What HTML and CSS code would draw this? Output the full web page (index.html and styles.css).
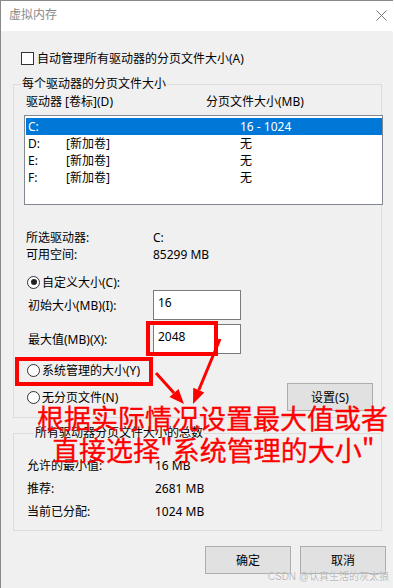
FILE: index.html
```html
<!DOCTYPE html>
<html lang="zh-CN">
<head>
    <meta charset="UTF-8">
    <meta name="viewport" content="width=device-width, initial-scale=1.0">
    <title>虚拟内存</title>
    <link rel="stylesheet" href="styles.css">
</head>
<body>
    <div class="window">
        <div class="titlebar">
            <span class="title">虚拟内存</span>
            <svg class="close" width="11" height="11" viewBox="0 0 11 11">
                <path d="M0.5 0.5 L10.5 10.5 M10.5 0.5 L0.5 10.5" stroke="#777" stroke-width="1" fill="none"/>
            </svg>
        </div>

        <div class="content">
            <label class="check-row"><span class="checkbox"></span>自动管理所有驱动器的分页文件大小(A)</label>

            <fieldset class="group group-drives">
                <legend>每个驱动器的分页文件大小</legend>
                <div class="list-head">
                    <span class="col-drive">驱动器 [卷标](D)</span>
                    <span>分页文件大小(MB)</span>
                </div>
                <div class="drive-list">
                    <div class="drive-row selected"><span class="c-letter">C:</span><span class="c-label"></span><span>16 - 1024</span></div>
                    <div class="drive-row"><span class="c-letter">D:</span><span class="c-label">[新加卷]</span><span>无</span></div>
                    <div class="drive-row"><span class="c-letter">E:</span><span class="c-label">[新加卷]</span><span>无</span></div>
                    <div class="drive-row"><span class="c-letter">F:</span><span class="c-label">[新加卷]</span><span>无</span></div>
                </div>

                <div class="info">
                    <div class="info-row"><span class="info-key">所选驱动器:</span><span>C:</span></div>
                    <div class="info-row"><span class="info-key">可用空间:</span><span>85299 MB</span></div>
                </div>

                <div class="radio-row custom"><span class="radio checked"></span>自定义大小(C):</div>
                <div class="field-row">
                    <span class="field-label">初始大小(MB)(I):</span>
                    <span class="input">16</span>
                </div>
                <div class="field-row second">
                    <span class="field-label">最大值(MB)(X):</span>
                    <span class="input">2048</span>
                </div>
                <div class="radio-row sys"><span class="radio"></span>系统管理的大小(Y)</div>
                <div class="none-row">
                    <span class="radio-inline"><span class="radio"></span>无分页文件(N)</span>
                    <button class="btn">设置(S)</button>
                </div>
            </fieldset>

            <fieldset class="group group-total">
                <legend>所有驱动器分页文件大小的总数</legend>
                <div class="total-row"><span class="total-key">允许的最小值:</span><span>16 MB</span></div>
                <div class="total-row"><span class="total-key">推荐:</span><span>2681 MB</span></div>
                <div class="total-row"><span class="total-key">当前已分配:</span><span>1024 MB</span></div>
            </fieldset>

            <div class="actions">
                <button class="btn">确定</button>
                <button class="btn">取消</button>
            </div>
        </div>

        <!-- annotation layer drawn over the dialog -->
        <div class="annot">
            <div class="mark mark-max"></div>
            <div class="mark mark-sys"></div>
            <svg class="arrows" width="394" height="588" viewBox="0 0 394 588">
                <line x1="156" y1="373" x2="174" y2="393" stroke="#f00" stroke-width="3"/>
                <polygon points="184,404 169.5,396.9 178.5,388.9" fill="#f00"/>
                <line x1="220" y1="339" x2="198.8" y2="390" stroke="#f00" stroke-width="3"/>
                <polygon points="193,404 193.2,387.8 204.3,392.5" fill="#f00"/>
            </svg>
            <div class="note note-1">根据实际情况设置最大值或者</div>
            <div class="note note-2">直接选择"系统管理的大小"</div>
            <div class="watermark">CSDN @认真生活的灰太狼</div>
        </div>
    </div>
</body>
</html>
```

FILE: styles.css
```css
* {
    box-sizing: border-box;
}
html, body {
    margin: 0;
    background: #fff;
}
body {
    font-family: "Noto Sans", "Noto Sans CJK SC", sans-serif;
    font-size: 12px;
    color: #000;
}
.window {
    position: relative;
    width: 393px;
    height: 588px;
    border-left: 1px solid #8a8a8a;
    border-top: 1px solid #8a8a8a;
    background: #f0f0f0;
    overflow: hidden;
    display: flex;
    flex-direction: column;
}
.titlebar {
    height: 30px;
    background: #fff;
    display: flex;
    align-items: center;
    justify-content: space-between;
    padding: 0 6px 0 8px;
}
.title {
    color: #8a8a8a;
    line-height: 16px;
    margin-top: -2px;
}
.close {
    display: block;
    margin-top: -2px;
}
.content {
    flex: 1;
    padding-top: 19px;
}
.check-row {
    display: flex;
    align-items: center;
    gap: 3px;
    height: 16px;
    padding-left: 20px;
}
.checkbox {
    width: 13px;
    height: 13px;
    border: 1px solid #333;
    background: #fff;
}
.group {
    margin: 10px 0 0 12px;
    width: 369px;
    min-width: 0;
    padding: 0;
    border: 1px solid #dcdcdc;
}
.group legend {
    margin-left: 7px;
    padding: 0 1px;
    line-height: 16px;
}
.group-drives {
    padding-bottom: 6px;
}
.list-head {
    display: flex;
    padding: 2px 0 0 12px;
    line-height: 16px;
}
.col-drive {
    width: 180px;
}
.drive-list {
    margin: 5px 0 0 10px;
    width: 359px;
    height: 90px;
    border: 1px solid #828790;
    background: #fff;
    padding: 2px 0 0 1px;
}
.drive-row {
    display: flex;
    height: 17px;
    line-height: 17px;
    padding-left: 2px;
}
.drive-row.selected {
    background: #0078d7;
    color: #fff;
}
.c-letter {
    width: 38px;
}
.c-label {
    width: 174px;
}
.info {
    margin-top: 24px;
    padding-left: 12px;
}
.info-row {
    display: flex;
    line-height: 17px;
}
.info-key {
    width: 127px;
}
.radio-row {
    display: flex;
    align-items: center;
    height: 16px;
    padding-left: 13px;
}
.radio-inline {
    display: flex;
    align-items: center;
}
.radio {
    position: relative;
    width: 13px;
    height: 13px;
    border: 1px solid #333;
    border-radius: 50%;
    background: #fff;
    margin-right: 2px;
}
.radio.checked::after {
    content: "";
    position: absolute;
    left: 2.5px;
    top: 2.5px;
    width: 6px;
    height: 6px;
    border-radius: 50%;
    background: #222;
}
.custom {
    margin-top: 11px;
}
.field-row {
    display: flex;
    align-items: center;
    height: 30px;
    padding-left: 14px;
}
.field-row.second {
    margin-top: 4px;
}
.field-label {
    width: 125px;
}
.input {
    width: 88px;
    height: 30px;
    border: 1px solid #7a7a7a;
    background: #fff;
    padding: 4px 0 0 4px;
    line-height: 16px;
}
.sys {
    margin-top: 8px;
}
.none-row {
    display: flex;
    align-items: center;
    justify-content: space-between;
    height: 28px;
    margin-top: 5px;
    padding: 0 8px 0 13px;
}
.btn {
    width: 86px;
    height: 28px;
    padding: 0;
    font: inherit;
    color: #000;
    background: #e1e1e1;
    border: 1px solid #adadad;
}
.group-total {
    margin-top: 7px;
    padding: 13px 0 7px 13px;
}
.total-row {
    display: flex;
    line-height: 23px;
}
.total-key {
    width: 128px;
}
.actions {
    display: flex;
    justify-content: flex-end;
    gap: 9px;
    margin-top: 15px;
    padding-right: 7px;
}
.annot {
    position: absolute;
    left: -1px;
    top: -1px;
    width: 394px;
    height: 588px;
    pointer-events: none;
}
.mark {
    position: absolute;
    border: 4px solid #f00;
}
.mark-max {
    left: 146px;
    top: 321px;
    width: 72px;
    height: 35px;
}
.mark-sys {
    left: 15px;
    top: 357px;
    width: 138px;
    height: 29px;
}
.arrows {
    position: absolute;
    left: 0;
    top: 0;
}
.note {
    position: absolute;
    color: #f00;
    font-family: "Noto Sans CJK SC", sans-serif;
    font-size: 27px;
    line-height: 32px;
    white-space: nowrap;
    -webkit-text-stroke: 0.3px #f00;
}
.note-1 {
    left: 37px;
    top: 402px;
}
.note-2 {
    left: 52px;
    top: 434px;
}
.watermark {
    position: absolute;
    right: 5px;
    top: 570px;
    font-family: "Liberation Sans", "Noto Sans CJK SC", sans-serif;
    font-size: 10px;
    line-height: 14px;
    color: rgba(140, 140, 140, 0.6);
    text-shadow: 0 0 1px #fff;
    white-space: nowrap;
}
```
